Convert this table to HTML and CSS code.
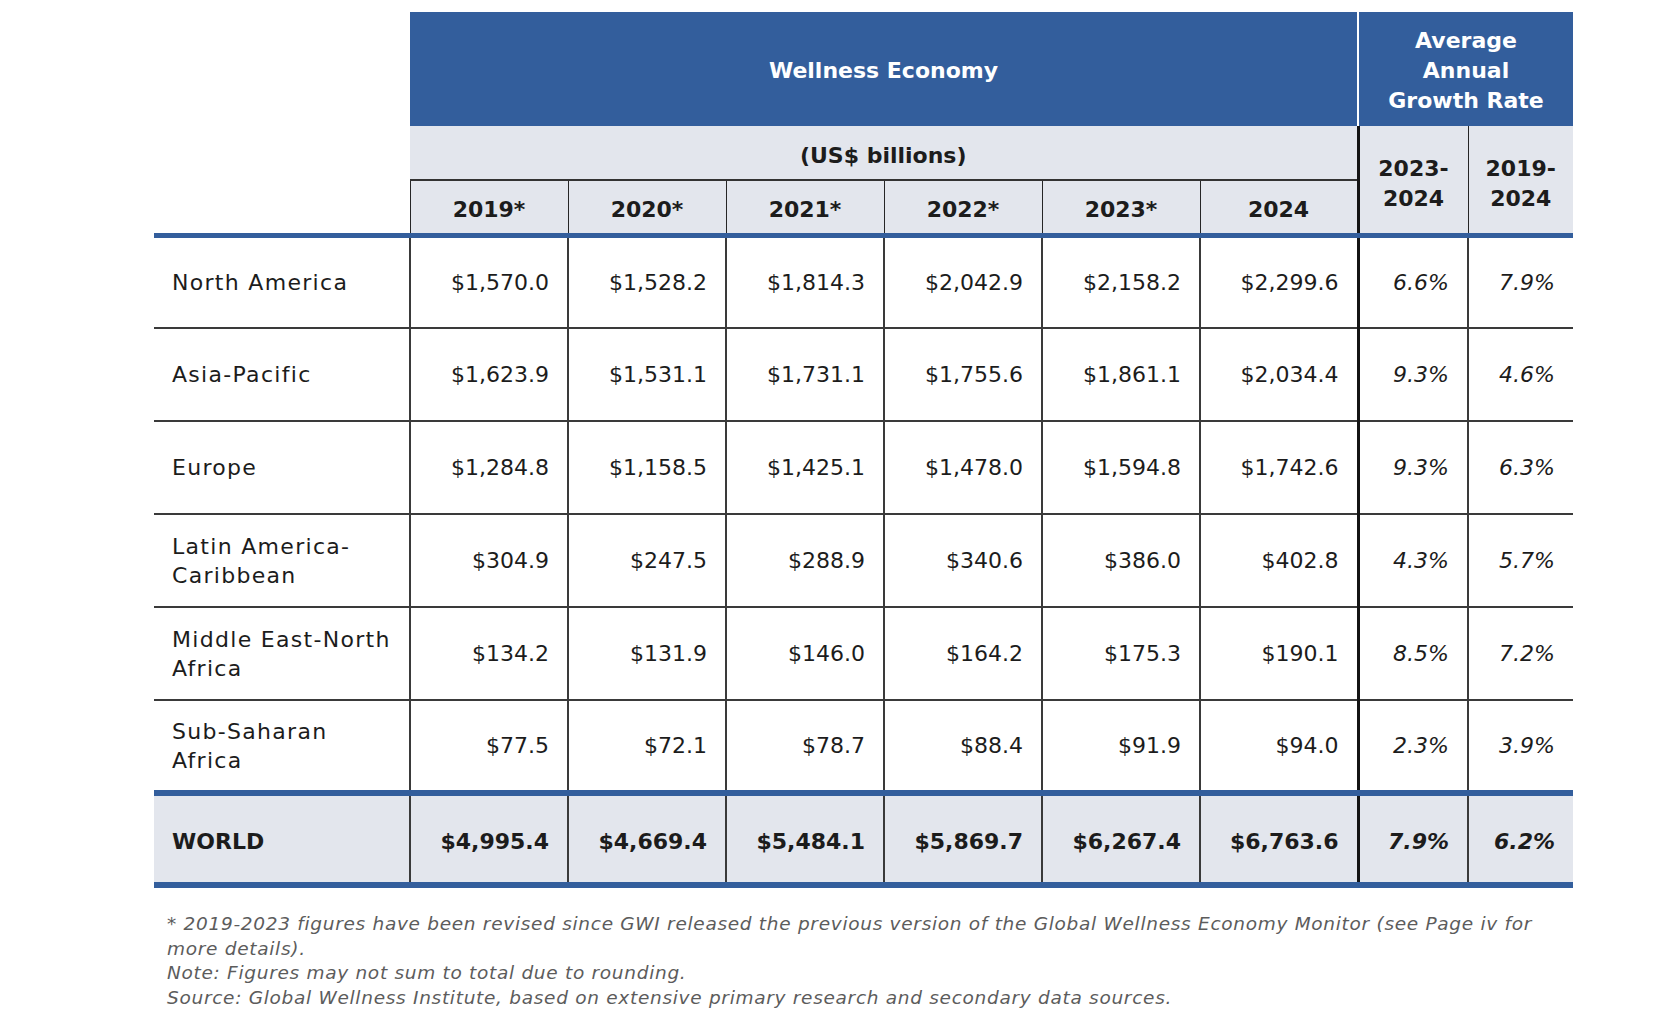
FILE: index.html
```html
<!DOCTYPE html>
<html lang="en">
<head>
<meta charset="utf-8">
<title>Wellness Economy by Region</title>
<link rel="stylesheet" href="styles.css">
</head>
<body>
<main class="page">
  <table class="gwe">
    <colgroup>
      <col class="c-region">
      <col class="c-year"><col class="c-year"><col class="c-year">
      <col class="c-year"><col class="c-year"><col class="c-year">
      <col class="c-g1">
      <col class="c-g2">
    </colgroup>
    <thead>
      <tr class="r-title">
        <td class="blank" rowspan="3"></td>
        <th class="title" colspan="6">Wellness Economy</th>
        <th class="title growth-title" colspan="2">Average<br>Annual<br>Growth Rate</th>
      </tr>
      <tr class="r-unit">
        <th class="unit" colspan="6">(US$ billions)</th>
        <th class="period first" rowspan="2">2023-<br>2024</th>
        <th class="period" rowspan="2">2019-<br>2024</th>
      </tr>
      <tr class="r-years">
        <th class="year">2019*</th>
        <th class="year">2020*</th>
        <th class="year">2021*</th>
        <th class="year">2022*</th>
        <th class="year">2023*</th>
        <th class="year">2024</th>
      </tr>
    </thead>
    <tbody>
      <tr>
        <th class="region">North America</th>
        <td class="num">$1,570.0</td><td class="num">$1,528.2</td><td class="num">$1,814.3</td>
        <td class="num">$2,042.9</td><td class="num">$2,158.2</td><td class="num">$2,299.6</td>
        <td class="pct first">6.6%</td><td class="pct">7.9%</td>
      </tr>
      <tr>
        <th class="region">Asia-Pacific</th>
        <td class="num">$1,623.9</td><td class="num">$1,531.1</td><td class="num">$1,731.1</td>
        <td class="num">$1,755.6</td><td class="num">$1,861.1</td><td class="num">$2,034.4</td>
        <td class="pct first">9.3%</td><td class="pct">4.6%</td>
      </tr>
      <tr>
        <th class="region">Europe</th>
        <td class="num">$1,284.8</td><td class="num">$1,158.5</td><td class="num">$1,425.1</td>
        <td class="num">$1,478.0</td><td class="num">$1,594.8</td><td class="num">$1,742.6</td>
        <td class="pct first">9.3%</td><td class="pct">6.3%</td>
      </tr>
      <tr>
        <th class="region">Latin America-<br>Caribbean</th>
        <td class="num">$304.9</td><td class="num">$247.5</td><td class="num">$288.9</td>
        <td class="num">$340.6</td><td class="num">$386.0</td><td class="num">$402.8</td>
        <td class="pct first">4.3%</td><td class="pct">5.7%</td>
      </tr>
      <tr>
        <th class="region">Middle East-North<br>Africa</th>
        <td class="num">$134.2</td><td class="num">$131.9</td><td class="num">$146.0</td>
        <td class="num">$164.2</td><td class="num">$175.3</td><td class="num">$190.1</td>
        <td class="pct first">8.5%</td><td class="pct">7.2%</td>
      </tr>
      <tr>
        <th class="region">Sub-Saharan<br>Africa</th>
        <td class="num">$77.5</td><td class="num">$72.1</td><td class="num">$78.7</td>
        <td class="num">$88.4</td><td class="num">$91.9</td><td class="num">$94.0</td>
        <td class="pct first">2.3%</td><td class="pct">3.9%</td>
      </tr>
    </tbody>
    <tfoot>
      <tr class="world">
        <th class="region">WORLD</th>
        <td class="num">$4,995.4</td><td class="num">$4,669.4</td><td class="num">$5,484.1</td>
        <td class="num">$5,869.7</td><td class="num">$6,267.4</td><td class="num">$6,763.6</td>
        <td class="pct first">7.9%</td><td class="pct">6.2%</td>
      </tr>
    </tfoot>
  </table>

  <div class="notes">
    <p>* 2019-2023 figures have been revised since GWI released the previous version of the Global Wellness Economy Monitor (see Page iv for<br>more details).</p>
    <p>Note: Figures may not sum to total due to rounding.</p>
    <p>Source: Global Wellness Institute, based on extensive primary research and secondary data sources.</p>
  </div>
</main>
</body>
</html>
```

FILE: styles.css
```css
* {
  box-sizing: border-box;
}

html, body {
  margin: 0;
  padding: 0;
  background: #ffffff;
}

body {
  font-family: "DejaVu Sans", "Liberation Sans", sans-serif;
  color: #1c1c1c;
}

.page {
  padding: 12px 0 0 154px;
}

/* ---------- table ---------- */
.gwe {
  width: 1419px;
  table-layout: fixed;
  border-collapse: collapse;
  font-size: 22px;
  line-height: 29px;
}

.c-region { width: 256px; }
.c-year   { width: 158px; }
.c-g1     { width: 110px; }
.c-g2     { width: 105px; }

/* header */
.r-title { height: 114px; }
.r-unit  { height: 54px; }
.r-years { height: 55px; }

.blank {
  padding: 0;
  background: #ffffff;
  border-bottom: 5px solid #335e9c;
}

.title {
  background: #335e9c;
  color: #ffffff;
  font-weight: bold;
  text-align: center;
  vertical-align: middle;
  padding: 2px 0 0;
}

.growth-title {
  border-left: 2px solid #ffffff;
  line-height: 30px;
  padding-top: 4px;
}

.unit {
  background: #e3e6ed;
  font-weight: bold;
  text-align: center;
  vertical-align: middle;
  padding: 5px 0 0;
}

.period {
  background: #e3e6ed;
  font-weight: bold;
  text-align: center;
  vertical-align: middle;
  line-height: 30px;
  padding: 10px 0 0;
  border-left: 1px solid #262626;
  border-bottom: 5px solid #335e9c;
}

.period.first {
  border-left: 3px solid #141414;
}

.year {
  background: #e3e6ed;
  font-weight: bold;
  text-align: center;
  vertical-align: middle;
  padding: 6px 0 0;
  border-top: 2px solid #333333;
  border-left: 1px solid #262626;
  border-bottom: 5px solid #335e9c;
}

/* body rows */
tbody tr { height: 93px; }

.region {
  text-align: left;
  font-weight: normal;
  letter-spacing: 1.3px;
  padding: 0 8px 0 18px;
  vertical-align: middle;
  border-bottom: 2px solid #3a3a3a;
}

.num,
.pct {
  text-align: right;
  padding: 0 18px 0 0;
  vertical-align: middle;
  border-left: 2px solid #3a3a3a;
  border-bottom: 2px solid #3a3a3a;
}

.pct {
  font-style: italic;
}

.pct.first {
  border-left: 3px solid #141414;
}

/* world row */
.world {
  height: 92px;
  background: #e3e6ed;
}

.world th,
.world td {
  font-weight: bold;
  padding-top: 4px;
  border-top: 6px solid #335e9c;
  border-bottom: 6px solid #335e9c;
}

.world .region {
  letter-spacing: 0;
}

/* ---------- notes ---------- */
.notes {
  margin-top: 24px;
  padding-left: 13px;
  font-size: 18.5px;
  line-height: 24.5px;
  letter-spacing: 0.7px;
  font-style: italic;
  color: #5c5c5c;
}

.notes p {
  margin: 0;
  white-space: nowrap;
}
```
